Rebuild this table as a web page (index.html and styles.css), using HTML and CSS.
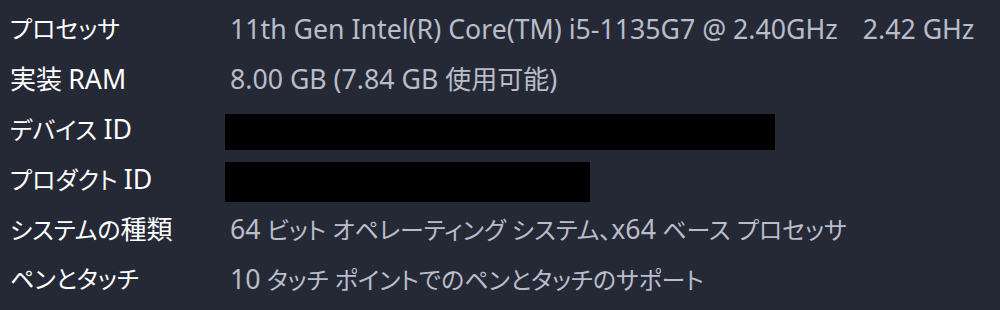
FILE: index.html
```html
<!DOCTYPE html>
<html>
  <head>
    <title>デバイスの仕様</title>
    <link rel="stylesheet" href="styles.css">
  </head>
  <body>
    <div class="specs">
      <div class="label">プロセッサ</div>
      <div class="value"><span class="en">11th Gen Intel(R) Core(TM) i5-1135G7 @ 2.40GHz</span><span class="en clock">2.42 GHz</span></div>

      <div class="label"><span class="kanji">実装</span> <span class="en">RAM</span></div>
      <div class="value"><span class="en">8.00 GB (7.84 GB </span><span class="kanji">使用可能</span><span class="en">)</span></div>

      <div class="label">デバイス <span class="en">ID</span></div>
      <div class="value"><span class="redact long"></span></div>

      <div class="label">プロダクト <span class="en">ID</span></div>
      <div class="value"><span class="redact short"></span></div>

      <div class="label">システムの<span class="kanji">種類</span></div>
      <div class="value"><span class="en">64</span> ビット オペレーティング システム、<span class="en">x64</span> ベース プロセッサ</div>

      <div class="label">ペンとタッチ</div>
      <div class="value"><span class="en">10</span> タッチ ポイントでのペンとタッチのサポート</div>
    </div>
  </body>
</html>
```

FILE: styles.css
```css
body {
  margin: 0;
  background-color: #252936;
  font-family: "Noto Sans", "Noto Sans CJK JP", sans-serif;
  font-size: 24px;
  font-feature-settings: "palt";
}
.specs {
  display: grid;
  grid-template-columns: 220px auto;
  grid-auto-rows: 50px;
  padding: 4px 0 0 10px;
}
.label,
.value {
  line-height: 50px;
  white-space: nowrap;
}
.en {
  font-size: 26.7px;
}
.kanji {
  font-size: 26px;
}
.label {
  color: #ffffff;
}
.value {
  color: #b9bdca;
}
.clock {
  margin-left: 25px;
}
.redact {
  display: inline-block;
  vertical-align: middle;
  height: 36px;
  background-color: #000000;
  margin-left: -5px;
}
.redact.long {
  width: 550px;
}
.redact.short {
  width: 365px;
  height: 40px;
}
```
